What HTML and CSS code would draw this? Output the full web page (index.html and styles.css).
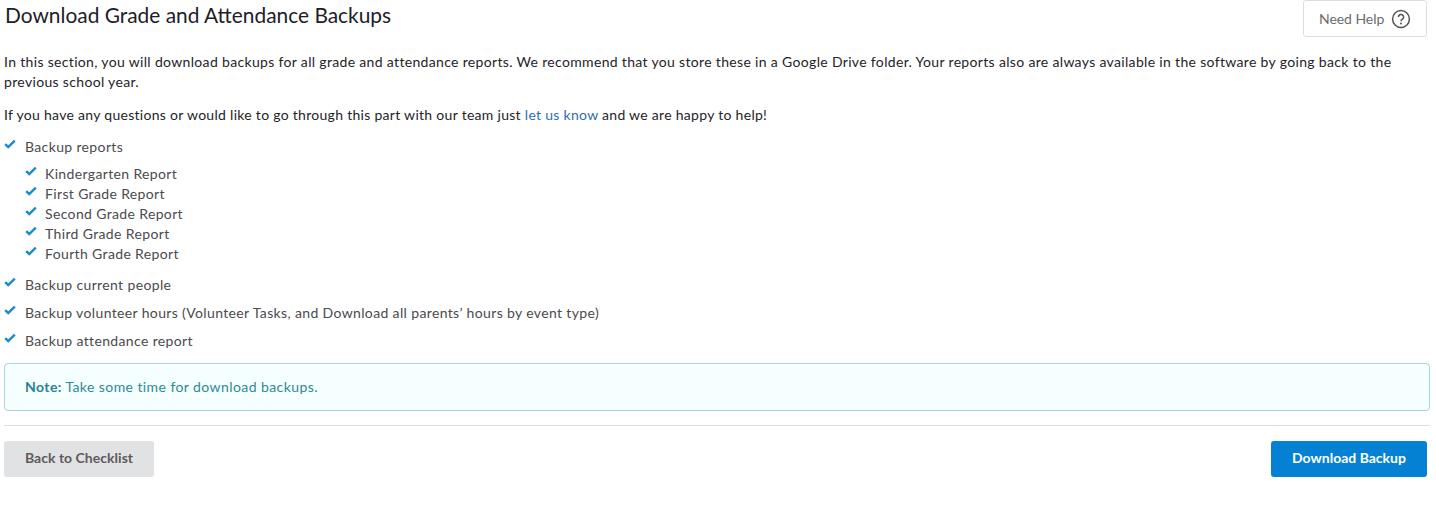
FILE: index.html
```html
<!DOCTYPE html>
<html lang="en">
<head>
<meta charset="utf-8">
<title>Download Grade and Attendance Backups</title>
<link rel="stylesheet" href="styles.css">
</head>
<body>
<main class="page">
  <header class="head">
    <h1 class="title">Download Grade and Attendance Backups</h1>
    <button class="help" type="button">Need Help
      <svg class="help-icon" viewBox="0 0 20 20" aria-hidden="true"><circle cx="10" cy="10" r="8.4"/><path d="M7.4 8a2.6 2.6 0 1 1 4 2.2c-.9.6-1.4 1-1.4 2"/><circle class="dot" cx="10" cy="14.6" r="1"/></svg>
    </button>
  </header>
  <p class="para first">In this section, you will download backups for all grade and attendance reports. We recommend that you store these in a Google Drive folder. Your reports also are always available in the software by going back to the previous school year.</p>
  <p class="para second">If you have any questions or would like to go through this part with our team just <a class="link" href="#">let us know</a> and we are happy to help!</p>
  <ul class="checks">
    <li class="item">
      <svg class="tick" viewBox="0 0 12 10" aria-hidden="true"><path d="M1.2 5.2 4.2 8 10.8 1.6"/></svg>
      <div>Backup reports
        <ul class="sub">
          <li class="sub-item"><svg class="tick" viewBox="0 0 12 10" aria-hidden="true"><path d="M1.2 5.2 4.2 8 10.8 1.6"/></svg>Kindergarten Report</li>
          <li class="sub-item"><svg class="tick" viewBox="0 0 12 10" aria-hidden="true"><path d="M1.2 5.2 4.2 8 10.8 1.6"/></svg>First Grade Report</li>
          <li class="sub-item"><svg class="tick" viewBox="0 0 12 10" aria-hidden="true"><path d="M1.2 5.2 4.2 8 10.8 1.6"/></svg>Second Grade Report</li>
          <li class="sub-item"><svg class="tick" viewBox="0 0 12 10" aria-hidden="true"><path d="M1.2 5.2 4.2 8 10.8 1.6"/></svg>Third Grade Report</li>
          <li class="sub-item"><svg class="tick" viewBox="0 0 12 10" aria-hidden="true"><path d="M1.2 5.2 4.2 8 10.8 1.6"/></svg>Fourth Grade Report</li>
        </ul>
      </div>
    </li>
    <li class="item"><svg class="tick" viewBox="0 0 12 10" aria-hidden="true"><path d="M1.2 5.2 4.2 8 10.8 1.6"/></svg><div>Backup current people</div></li>
    <li class="item"><svg class="tick" viewBox="0 0 12 10" aria-hidden="true"><path d="M1.2 5.2 4.2 8 10.8 1.6"/></svg><div>Backup volunteer hours (Volunteer Tasks, and Download all parents’ hours by event type)</div></li>
    <li class="item"><svg class="tick" viewBox="0 0 12 10" aria-hidden="true"><path d="M1.2 5.2 4.2 8 10.8 1.6"/></svg><div>Backup attendance report</div></li>
  </ul>
  <div class="note"><strong>Note:</strong> Take some time for download backups.</div>
  <hr class="rule">
  <footer class="actions">
    <button class="btn btn-back" type="button">Back to Checklist</button>
    <button class="btn btn-primary" type="button">Download Backup</button>
  </footer>
</main>
</body>
</html>
```
FILE: styles.css
```css
* { box-sizing: border-box; }
html, body { margin: 0; background: #fff; }
body { font-family: Lato, "Liberation Sans", sans-serif; font-size: 14px; color: #1f2329; }
.page { padding: 0 6px 0 4px; }
.head { display: flex; justify-content: space-between; align-items: flex-start; height: 52px; padding-right: 3px; }
.title { margin: 0 0 0 1px; font-size: 20.9px; line-height: 30px; font-weight: 400; color: #1d2127; }
.help { display: flex; align-items: center; gap: 7px; width: 124px; height: 37px; padding: 0 0 0 15px; background: #fff; border: 1px solid #dcdee0; border-radius: 3px; font: 14px Lato, sans-serif; letter-spacing: -.05px; color: #6b6b6f; }
.help-icon { width: 20px; height: 20px; fill: none; stroke: #55555a; stroke-width: 1.5; }
.help-icon .dot { fill: #55555a; stroke: none; }
.para { margin: 0; line-height: 20px; letter-spacing: .33px; }
.second { margin-top: 13px; letter-spacing: .29px; }
.link { color: #2f6db5; text-decoration: none; }
.checks { list-style: none; margin: 12px 0 0; padding: 0; color: #4a4a4f; letter-spacing: .36px; line-height: 20px; }
.item { display: flex; margin-bottom: 8px; }
.item > .tick { margin: 2px 9px 0 0; }
.tick { flex: none; width: 12px; height: 10px; fill: none; stroke: #1a8ccb; stroke-width: 2.4; }
.sub { list-style: none; margin: 7px 0 3px; padding: 0; }
.sub-item { display: flex; }
.sub-item .tick { margin: 2px 8px 0 0; }
.note { height: 48px; margin-top: 12px; padding: 0 20px; line-height: 46px; background: #f6ffff; border: 1px solid #a9d5d8; border-radius: 4px; color: #2f8896; letter-spacing: .42px; }
.note strong { color: #2a8093; }
.rule { margin: 14px 0 15px; border: 0; border-top: 1px solid #dedfe1; }
.actions { display: flex; justify-content: space-between; padding-right: 3px; }
.btn { height: 36px; padding: 0 0 3px; border: 0; border-radius: 3px; font: 700 14px Lato, sans-serif; }
.btn-back { width: 150px; background: #e1e2e4; color: #5f5a5c; letter-spacing: .03px; }
.btn-primary { width: 156px; background: #0581d4; color: #fff; }
```
